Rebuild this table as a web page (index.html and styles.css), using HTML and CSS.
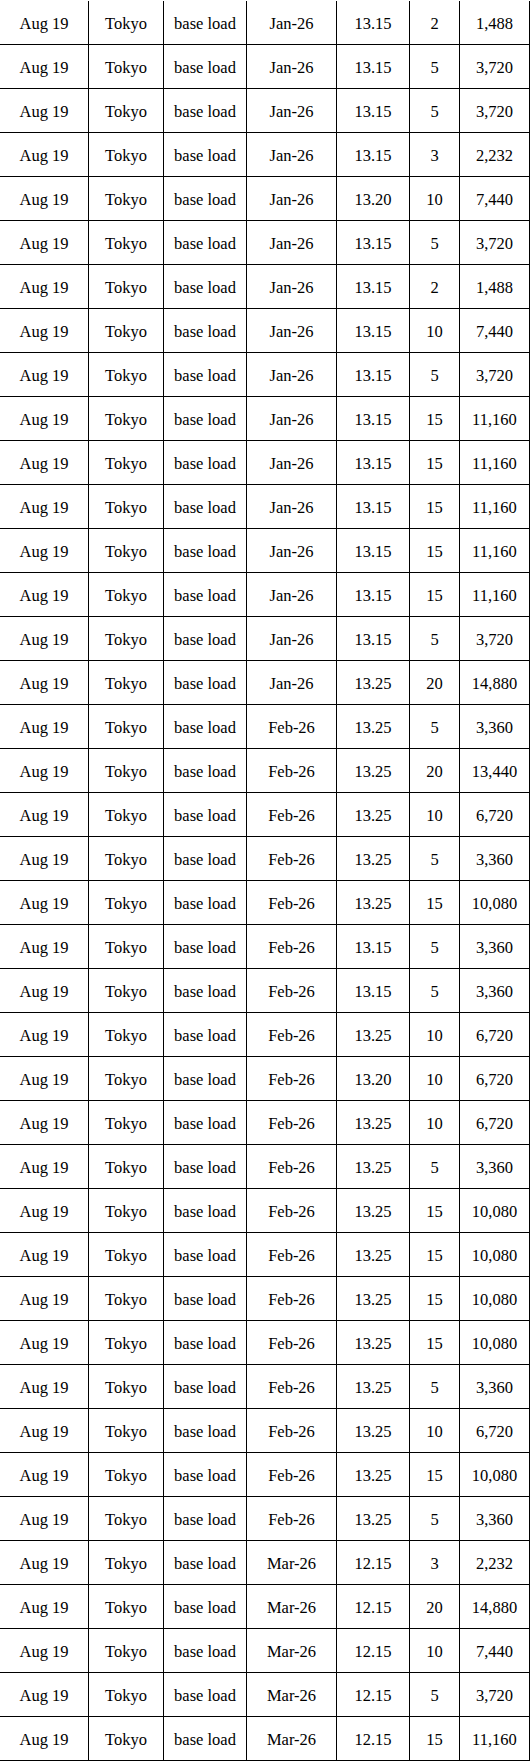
FILE: index.html
```html
<!DOCTYPE html>
<html>
<head>
<meta charset="utf-8">
<link rel="stylesheet" href="styles.css">
</head>
<body>
<table class="trades">
<colgroup>
<col class="c-date"><col class="c-city"><col class="c-type"><col class="c-month"><col class="c-price"><col class="c-qty"><col class="c-total">
</colgroup>
<tbody>
<tr><td>Aug 19</td><td>Tokyo</td><td>base load</td><td>Jan-26</td><td>13.15</td><td>2</td><td>1,488</td></tr>
<tr><td>Aug 19</td><td>Tokyo</td><td>base load</td><td>Jan-26</td><td>13.15</td><td>5</td><td>3,720</td></tr>
<tr><td>Aug 19</td><td>Tokyo</td><td>base load</td><td>Jan-26</td><td>13.15</td><td>5</td><td>3,720</td></tr>
<tr><td>Aug 19</td><td>Tokyo</td><td>base load</td><td>Jan-26</td><td>13.15</td><td>3</td><td>2,232</td></tr>
<tr><td>Aug 19</td><td>Tokyo</td><td>base load</td><td>Jan-26</td><td>13.20</td><td>10</td><td>7,440</td></tr>
<tr><td>Aug 19</td><td>Tokyo</td><td>base load</td><td>Jan-26</td><td>13.15</td><td>5</td><td>3,720</td></tr>
<tr><td>Aug 19</td><td>Tokyo</td><td>base load</td><td>Jan-26</td><td>13.15</td><td>2</td><td>1,488</td></tr>
<tr><td>Aug 19</td><td>Tokyo</td><td>base load</td><td>Jan-26</td><td>13.15</td><td>10</td><td>7,440</td></tr>
<tr><td>Aug 19</td><td>Tokyo</td><td>base load</td><td>Jan-26</td><td>13.15</td><td>5</td><td>3,720</td></tr>
<tr><td>Aug 19</td><td>Tokyo</td><td>base load</td><td>Jan-26</td><td>13.15</td><td>15</td><td>11,160</td></tr>
<tr><td>Aug 19</td><td>Tokyo</td><td>base load</td><td>Jan-26</td><td>13.15</td><td>15</td><td>11,160</td></tr>
<tr><td>Aug 19</td><td>Tokyo</td><td>base load</td><td>Jan-26</td><td>13.15</td><td>15</td><td>11,160</td></tr>
<tr><td>Aug 19</td><td>Tokyo</td><td>base load</td><td>Jan-26</td><td>13.15</td><td>15</td><td>11,160</td></tr>
<tr><td>Aug 19</td><td>Tokyo</td><td>base load</td><td>Jan-26</td><td>13.15</td><td>15</td><td>11,160</td></tr>
<tr><td>Aug 19</td><td>Tokyo</td><td>base load</td><td>Jan-26</td><td>13.15</td><td>5</td><td>3,720</td></tr>
<tr><td>Aug 19</td><td>Tokyo</td><td>base load</td><td>Jan-26</td><td>13.25</td><td>20</td><td>14,880</td></tr>
<tr><td>Aug 19</td><td>Tokyo</td><td>base load</td><td>Feb-26</td><td>13.25</td><td>5</td><td>3,360</td></tr>
<tr><td>Aug 19</td><td>Tokyo</td><td>base load</td><td>Feb-26</td><td>13.25</td><td>20</td><td>13,440</td></tr>
<tr><td>Aug 19</td><td>Tokyo</td><td>base load</td><td>Feb-26</td><td>13.25</td><td>10</td><td>6,720</td></tr>
<tr><td>Aug 19</td><td>Tokyo</td><td>base load</td><td>Feb-26</td><td>13.25</td><td>5</td><td>3,360</td></tr>
<tr><td>Aug 19</td><td>Tokyo</td><td>base load</td><td>Feb-26</td><td>13.25</td><td>15</td><td>10,080</td></tr>
<tr><td>Aug 19</td><td>Tokyo</td><td>base load</td><td>Feb-26</td><td>13.15</td><td>5</td><td>3,360</td></tr>
<tr><td>Aug 19</td><td>Tokyo</td><td>base load</td><td>Feb-26</td><td>13.15</td><td>5</td><td>3,360</td></tr>
<tr><td>Aug 19</td><td>Tokyo</td><td>base load</td><td>Feb-26</td><td>13.25</td><td>10</td><td>6,720</td></tr>
<tr><td>Aug 19</td><td>Tokyo</td><td>base load</td><td>Feb-26</td><td>13.20</td><td>10</td><td>6,720</td></tr>
<tr><td>Aug 19</td><td>Tokyo</td><td>base load</td><td>Feb-26</td><td>13.25</td><td>10</td><td>6,720</td></tr>
<tr><td>Aug 19</td><td>Tokyo</td><td>base load</td><td>Feb-26</td><td>13.25</td><td>5</td><td>3,360</td></tr>
<tr><td>Aug 19</td><td>Tokyo</td><td>base load</td><td>Feb-26</td><td>13.25</td><td>15</td><td>10,080</td></tr>
<tr><td>Aug 19</td><td>Tokyo</td><td>base load</td><td>Feb-26</td><td>13.25</td><td>15</td><td>10,080</td></tr>
<tr><td>Aug 19</td><td>Tokyo</td><td>base load</td><td>Feb-26</td><td>13.25</td><td>15</td><td>10,080</td></tr>
<tr><td>Aug 19</td><td>Tokyo</td><td>base load</td><td>Feb-26</td><td>13.25</td><td>15</td><td>10,080</td></tr>
<tr><td>Aug 19</td><td>Tokyo</td><td>base load</td><td>Feb-26</td><td>13.25</td><td>5</td><td>3,360</td></tr>
<tr><td>Aug 19</td><td>Tokyo</td><td>base load</td><td>Feb-26</td><td>13.25</td><td>10</td><td>6,720</td></tr>
<tr><td>Aug 19</td><td>Tokyo</td><td>base load</td><td>Feb-26</td><td>13.25</td><td>15</td><td>10,080</td></tr>
<tr><td>Aug 19</td><td>Tokyo</td><td>base load</td><td>Feb-26</td><td>13.25</td><td>5</td><td>3,360</td></tr>
<tr><td>Aug 19</td><td>Tokyo</td><td>base load</td><td>Mar-26</td><td>12.15</td><td>3</td><td>2,232</td></tr>
<tr><td>Aug 19</td><td>Tokyo</td><td>base load</td><td>Mar-26</td><td>12.15</td><td>20</td><td>14,880</td></tr>
<tr><td>Aug 19</td><td>Tokyo</td><td>base load</td><td>Mar-26</td><td>12.15</td><td>10</td><td>7,440</td></tr>
<tr><td>Aug 19</td><td>Tokyo</td><td>base load</td><td>Mar-26</td><td>12.15</td><td>5</td><td>3,720</td></tr>
<tr><td>Aug 19</td><td>Tokyo</td><td>base load</td><td>Mar-26</td><td>12.15</td><td>15</td><td>11,160</td></tr>
</tbody>
</table>
</body>
</html>
```

FILE: styles.css
```css
html, body {
  margin: 0;
  padding: 0;
  background: #ffffff;
}
body {
  padding-top: 1px;
  font-family: "Liberation Serif", "Times New Roman", serif;
  font-size: 16.5px;
  color: #000000;
}
.trades {
  width: 530px;
  table-layout: fixed;
  border-collapse: separate;
  border-spacing: 0;
}
.c-date { width: 89px; }
.c-city { width: 75px; }
.c-type { width: 83px; }
.c-month { width: 90px; }
.c-price { width: 73px; }
.c-qty { width: 50px; }
.c-total { width: 70px; }
.trades td {
  box-sizing: border-box;
  height: 44px;
  padding: 2px 0 0 0;
  text-align: center;
  vertical-align: middle;
  white-space: nowrap;
  border-right: 1px solid #000000;
  border-bottom: 1px solid #000000;
  line-height: 20px;
}
```
